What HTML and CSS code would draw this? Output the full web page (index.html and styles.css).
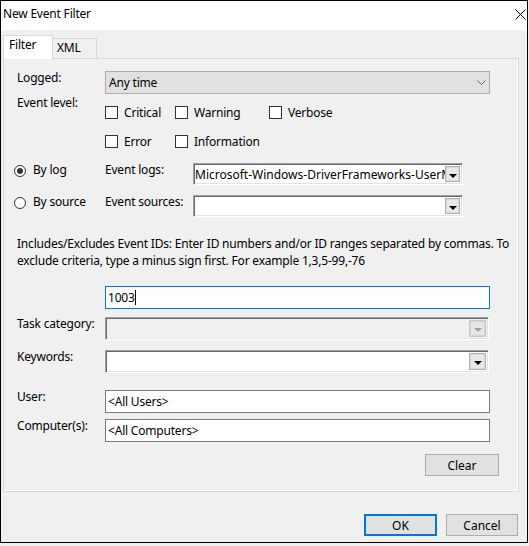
FILE: index.html
```html
<!DOCTYPE html>
<html lang="en">
<head>
    <meta charset="UTF-8">
    <meta name="viewport" content="width=device-width, initial-scale=1.0">
    <title>New Event Filter</title>
    <link rel="stylesheet" href="styles.css">
</head>
<body>
    <div class="window">
        <div class="titlebar">
            <span class="title">New Event Filter</span>
            <svg class="close" width="11" height="11" viewBox="0 0 11 11"><path d="M0.5 0.5L10.5 10.5M10.5 0.5L0.5 10.5" stroke="#000" stroke-width="1"/></svg>
        </div>
        <div class="client">
            <div class="tabs">
                <div class="tab active">Filter</div>
                <div class="tab xml">XML</div>
            </div>
            <div class="panel">
                <div class="row r-logged">
                    <div class="label">Logged:</div>
                    <div class="dropdown">
                        <span>Any time</span>
                        <svg width="9" height="5" viewBox="0 0 9 5"><path d="M0.5 0.5L4.5 4.5L8.5 0.5" fill="none" stroke="#606060" stroke-width="1"/></svg>
                    </div>
                </div>

                <div class="row r-level">
                    <div class="label">Event level:</div>
                    <div class="levels">
                        <div class="check"><span class="box"></span>Critical</div>
                        <div class="check"><span class="box"></span>Warning</div>
                        <div class="check"><span class="box"></span>Verbose</div>
                        <div class="check"><span class="box"></span>Error</div>
                        <div class="check"><span class="box"></span>Information</div>
                    </div>
                </div>

                <div class="row r-logs">
                    <div class="label radio-label"><span class="radio checked"></span>By log</div>
                    <div class="label">Event logs:</div>
                    <div class="combo small">
                        <span class="combo-text">Microsoft-Windows-DriverFrameworks-UserMode/Operational</span>
                        <span class="drop"><svg width="8" height="4" viewBox="0 0 8 4"><path d="M0 0H8L4 4Z" fill="#000"/></svg></span>
                    </div>
                </div>

                <div class="row r-sources">
                    <div class="label radio-label"><span class="radio"></span>By source</div>
                    <div class="label">Event sources:</div>
                    <div class="combo small">
                        <span class="combo-text"></span>
                        <span class="drop"><svg width="8" height="4" viewBox="0 0 8 4"><path d="M0 0H8L4 4Z" fill="#000"/></svg></span>
                    </div>
                </div>

                <p class="desc">Includes/Excludes Event IDs: Enter ID numbers and/or ID ranges separated by commas. To<br>exclude criteria, type a minus sign first. For example 1,3,5-99,-76</p>

                <div class="row r-ids">
                    <div class="label"></div>
                    <div class="textbox focus">1003<span class="caret"></span></div>
                </div>

                <div class="row r-task">
                    <div class="label">Task category:</div>
                    <div class="combo field disabled">
                        <span class="combo-text"></span>
                        <span class="drop"><svg width="8" height="4" viewBox="0 0 8 4"><path d="M0 0H8L4 4Z" fill="#a0a0a0"/></svg></span>
                    </div>
                </div>

                <div class="row r-keywords">
                    <div class="label">Keywords:</div>
                    <div class="combo field">
                        <span class="combo-text"></span>
                        <span class="drop"><svg width="8" height="4" viewBox="0 0 8 4"><path d="M0 0H8L4 4Z" fill="#000"/></svg></span>
                    </div>
                </div>

                <div class="row r-user">
                    <div class="label">User:</div>
                    <div class="textbox">&lt;All Users&gt;</div>
                </div>

                <div class="row r-comp">
                    <div class="label">Computer(s):</div>
                    <div class="textbox">&lt;All Computers&gt;</div>
                </div>

                <div class="row r-clear">
                    <button class="btn clear">Clear</button>
                </div>
            </div>

            <div class="footer">
                <button class="btn ok">OK</button>
                <button class="btn cancel">Cancel</button>
            </div>
        </div>
    </div>
</body>
</html>
```

FILE: styles.css
```css
* {
    box-sizing: border-box;
}

body {
    margin: 0;
    background-color: #f0f0f0;
    font-family: "Segoe UI", "Noto Sans", sans-serif;
    font-size: 12px;
    letter-spacing: -0.2px;
    color: #000;
}

.window {
    width: 528px;
    height: 543px;
    border: 1px solid #000;
    background-color: #f0f0f0;
    display: flex;
    flex-direction: column;
}

.titlebar {
    height: 29px;
    flex: none;
    background-color: #fff;
    display: flex;
    justify-content: space-between;
    align-items: flex-start;
    padding: 5px 1px 0 2px;
    line-height: 16px;
}

.close {
    margin-top: 3px;
}

.client {
    flex: 1;
    padding: 5px 9px 0 1px;
    display: flex;
    flex-direction: column;
}

/* Tabs */
.tabs {
    display: flex;
    align-items: flex-end;
    height: 24px;
    margin-left: 1px;
    margin-bottom: -1px;
    position: relative;
    z-index: 1;
    line-height: 16px;
}

.tab {
    border: 1px solid #d9d9d9;
    border-bottom: none;
    padding-top: 1px;
}

.tab.active {
    width: 50px;
    height: 24px;
    padding-left: 5px;
    background-color: #fff;
}

.tab.xml {
    width: 45px;
    height: 20px;
    margin-left: -1px;
    margin-bottom: 1px;
    padding-left: 4px;
    background-color: #f0f0f0;
}

.panel {
    width: 516px;
    height: 434px;
    margin-left: 1px;
    border: 1px solid #d9d9d9;
    box-shadow: inset -1px -1px 0 #fff;
    padding-left: 13px;
}

/* Form rows */
.row {
    display: flex;
    align-items: flex-start;
}

.label {
    width: 88px;
    flex: none;
    line-height: 14px;
    white-space: nowrap;
}

.r-logged { margin-top: 12px; }
.r-level { margin-top: 2px; }
.r-logs { margin-top: 14px; }
.r-sources { margin-top: 10px; }
.r-ids { margin-top: 17px; }
.r-task { margin-top: 8px; }
.r-keywords { margin-top: 10px; }
.r-user { margin-top: 17px; }
.r-comp { margin-top: 6px; }
.r-clear { margin-top: 12px; }

.dropdown {
    width: 385px;
    height: 23px;
    display: flex;
    align-items: center;
    justify-content: space-between;
    border: 1px solid #adadad;
    background-color: #e1e1e1;
    padding: 0 3px 0 3px;
}

.levels {
    display: grid;
    grid-template-columns: 70px 94px auto;
    row-gap: 14px;
    padding-top: 9px;
}

.check {
    display: flex;
    align-items: center;
    gap: 6px;
    height: 15px;
    line-height: 15px;
}

.box {
    width: 13px;
    height: 13px;
    border: 1px solid #333;
    background-color: #fff;
}

.radio-label {
    display: flex;
    align-items: flex-start;
    gap: 7px;
    margin-left: -3px;
    width: 91px;
}

.radio {
    width: 12px;
    height: 12px;
    margin-top: 2px;
    border: 1px solid #333;
    border-radius: 50%;
    background-color: #fff;
    display: flex;
    align-items: center;
    justify-content: center;
}

.radio.checked::after {
    content: "";
    width: 6px;
    height: 6px;
    border-radius: 50%;
    background-color: #333;
}

/* Classic sunken combo boxes */
.combo {
    height: 23px;
    display: flex;
    align-items: center;
    background-color: #fff;
    border: 1px solid;
    border-color: #a0a0a0 #fff #fff #a0a0a0;
    box-shadow: inset 1px 1px 0 #696969, inset -1px -1px 0 #e3e3e3;
    padding: 0 2px 0 2px;
    overflow: hidden;
}

.combo.small {
    width: 270px;
    height: 22px;
    padding-left: 1px;
    letter-spacing: 0;
}

.combo.field {
    width: 384px;
}

.combo.disabled {
    background-color: #f0f0f0;
}

.combo-text {
    flex: 1;
    white-space: nowrap;
    overflow: hidden;
}

.drop {
    width: 17px;
    height: 17px;
    flex: none;
    display: flex;
    align-items: center;
    justify-content: center;
    padding-top: 3px;
    background-color: #e8e8e8;
    border: 1px solid #b0b0b0;
    box-shadow: inset 0 0 0 1px #dadada;
}

.combo.small .drop {
    width: 15px;
    height: 16px;
}

.combo.disabled .drop {
    border-color: #c8c8c8;
    box-shadow: inset 0 0 0 1px #d4d4d4;
    background-color: #e6e6e6;
}

.desc {
    margin: 18px 0 0;
    line-height: 17px;
    white-space: nowrap;
}

.textbox {
    width: 385px;
    height: 23px;
    display: flex;
    align-items: center;
    border: 1px solid #7a7a7a;
    background-color: #fff;
    padding: 0 2px;
    white-space: nowrap;
}

.textbox.focus {
    border-color: #0078d7;
}

.caret {
    width: 1px;
    height: 15px;
    background-color: #000;
}

/* Buttons */
.btn {
    height: 22px;
    padding: 0;
    border: 1px solid #adadad;
    background-color: #e1e1e1;
    font: inherit;
    color: #000;
}

.btn.clear {
    width: 74px;
    margin-left: 408px;
}

.footer {
    display: flex;
    justify-content: flex-end;
    gap: 9px;
    margin-top: 22px;
}

.btn.ok {
    width: 73px;
    border: 2px solid #0078d7;
}

.btn.cancel {
    width: 72px;
}
```
